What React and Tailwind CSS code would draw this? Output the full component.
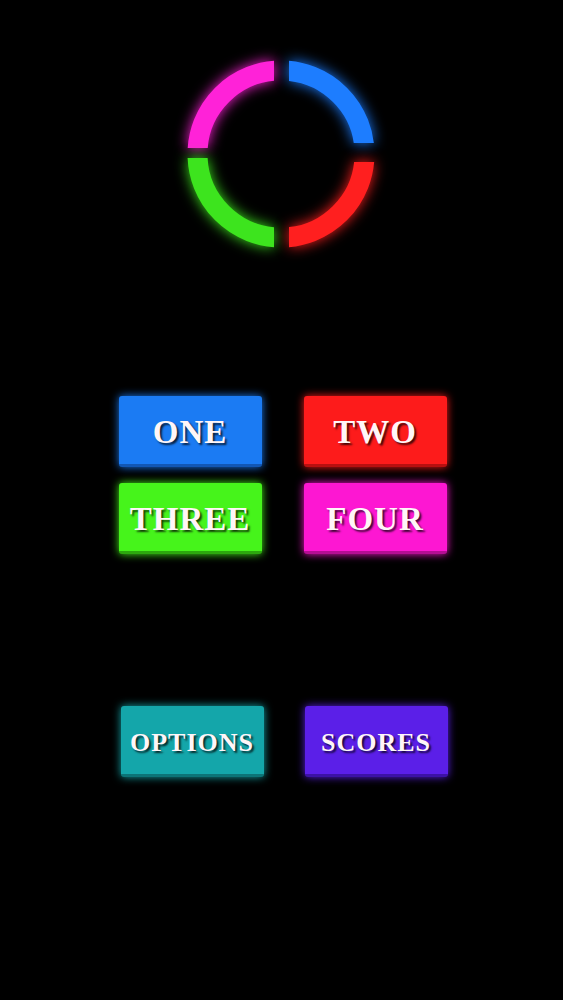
import React from "react";

const serif = "font-['Liberation_Serif','DejaVu_Serif',serif]";

function Ring() {
    return (
        <svg width="200" height="200" viewBox="0 0 200 200" className="overflow-visible">
            <defs>
                <clipPath id="tl"><rect x="-20" y="-20" width="112" height="114" /></clipPath>
                <clipPath id="tr"><rect x="107" y="-20" width="114" height="109" /></clipPath>
                <clipPath id="bl"><rect x="-20" y="104" width="112" height="116" /></clipPath>
                <clipPath id="br"><rect x="107" y="108" width="114" height="112" /></clipPath>
            </defs>
            <g className="drop-shadow-[0_0_7px_#ff22d8]">
                <circle cx="99" cy="100" r="83.5" fill="none" stroke="#ff22d8" strokeWidth="20" clipPath="url(#tl)" />
            </g>
            <g className="drop-shadow-[0_0_7px_#1d7dff]">
                <circle cx="99" cy="100" r="83.5" fill="none" stroke="#1d7dff" strokeWidth="20" clipPath="url(#tr)" />
            </g>
            <g className="drop-shadow-[0_0_7px_#3de41e]">
                <circle cx="99" cy="100" r="83.5" fill="none" stroke="#3de41e" strokeWidth="20" clipPath="url(#bl)" />
            </g>
            <g className="drop-shadow-[0_0_7px_#ff1f1f]">
                <circle cx="99" cy="100" r="83.5" fill="none" stroke="#ff1f1f" strokeWidth="20" clipPath="url(#br)" />
            </g>
        </svg>
    );
}

function Btn({ label, cls, small }) {
    return (
        <button
            className={`w-[143px] h-[71px] rounded-[3px] flex items-center justify-center pt-[5px] text-[#fff6f8] font-bold tracking-[1px] ${serif} [text-shadow:2px_2px_2px_rgba(0,0,0,0.75)] ${small ? "text-[26px]" : "text-[33px]"} ${cls}`}
        >
            {label}
        </button>
    );
}

export default function App() {
    return (
        <div className="w-full min-h-[1000px] bg-black flex flex-col items-center">
            <div className="mt-[54px]">
                <Ring />
            </div>

            {/* PLAY MODES */}
            <div className="mt-[142px] ml-[2px] flex flex-col gap-[16px]">
                <div className="flex gap-[42px]">
                    <Btn label="ONE" cls="bg-[#1b7bf3] border-b-[3px] border-[#1257b4] shadow-[0_0_8px_#1b7bf3]" />
                    <Btn label="TWO" cls="bg-[#fd1b1b] border-b-[3px] border-[#b81010] shadow-[0_0_8px_#fd1b1b]" />
                </div>
                <div className="flex gap-[42px]">
                    <Btn label="THREE" cls="bg-[#46f41b] border-b-[3px] border-[#2ca80e] shadow-[0_0_8px_#46f41b]" />
                    <Btn label="FOUR" cls="bg-[#fd17d2] border-b-[3px] border-[#b40e93] shadow-[0_0_8px_#fd17d2]" />
                </div>
            </div>

            {/* MENU */}
            <div className="mt-[152px] ml-[5px] flex gap-[41px]">
                <Btn small label="OPTIONS" cls="bg-[#14a6aa] border-b-[3px] border-[#0c7477] shadow-[0_0_8px_#14a6aa]" />
                <Btn small label="SCORES" cls="bg-[#5b1fe8] border-b-[3px] border-[#3c12a6] shadow-[0_0_8px_#5b1fe8]" />
            </div>
        </div>
    );
}
